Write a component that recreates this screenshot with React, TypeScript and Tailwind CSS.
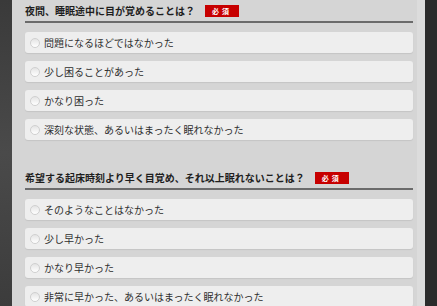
const sections = [
  {
    title: "夜間、睡眠途中に目が覚めることは？",
    options: [
      "問題になるほどではなかった",
      "少し困ることがあった",
      "かなり困った",
      "深刻な状態、あるいはまったく眠れなかった",
    ],
  },
  {
    title: "希望する起床時刻より早く目覚め、それ以上眠れないことは？",
    options: [
      "そのようなことはなかった",
      "少し早かった",
      "かなり早かった",
      "非常に早かった、あるいはまったく眠れなかった",
    ],
  },
];

function Option({ label }: { label: string }) {
  return (
    <label className="flex h-[21px] items-center gap-[4px] rounded-[3px] bg-[#eeeeee] pl-[5px] shadow-[0_1px_1px_rgba(0,0,0,0.08)]">
      <span className="h-[10px] w-[10px] rounded-full border border-[#d0d0d0] bg-gradient-to-b from-[#e4e4e4] to-white" />
      <span className="text-[10px] leading-none text-[#2e2e2e]">{label}</span>
    </label>
  );
}

export default function App() {
  return (
    <div
      className="flex h-[306px] w-[437px] overflow-hidden"
      style={{ fontFamily: '"Noto Sans CJK JP", "Noto Sans", sans-serif' }}
    >
      <div className="w-[12px] bg-gradient-to-b from-[#3a3a3a] via-[#4a4a4a] to-[#3c3c3c]" />
      <div className="flex-1 border-r-[8px] border-[#dcdcdc] bg-[#d5d5d5] pt-[5px] pl-[13px] pr-[4px]">
        {sections.map((s, i) => (
          <section key={i} className={i > 0 ? "mt-[32px]" : ""}>
            <div className="flex items-center border-b-2 border-[#6b6b6b] pb-[4px]">
              <h2 className="text-[10px] font-bold leading-[12px] text-[#1e1e1e]">{s.title}</h2>
              <span className="ml-[10px] flex h-[12px] w-[34px] items-center justify-center bg-[#c70000] text-[7px] font-bold tracking-[3px] text-white">
                必須
              </span>
            </div>
            <div className="mt-[9px] flex flex-col gap-[8px]">
              {s.options.map((o) => (
                <Option key={o} label={o} />
              ))}
            </div>
          </section>
        ))}
      </div>
      <div className="w-[12px] bg-[#2b2b2b]" />
    </div>
  );
}
